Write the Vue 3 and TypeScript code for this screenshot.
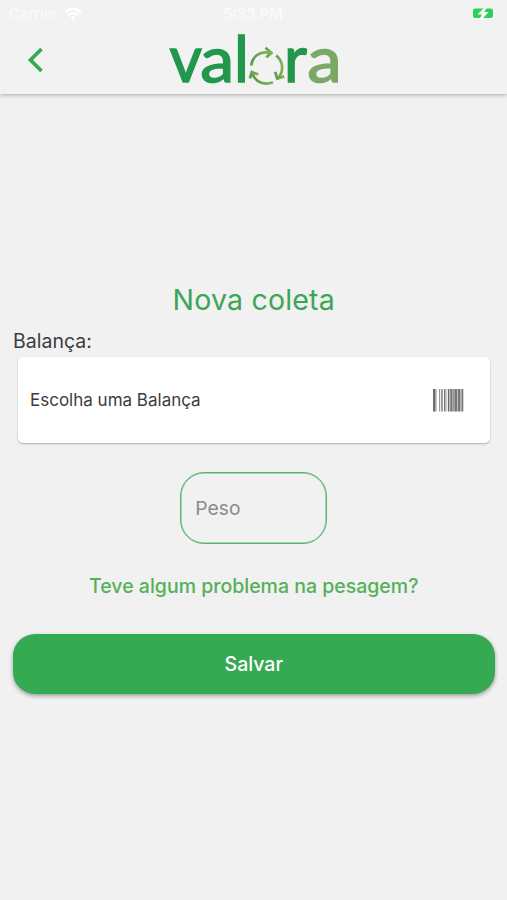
<script setup lang="ts">
import { ref } from 'vue'

interface Bar { x: number; w: number; color: string }

const peso = ref('')
const bars: Bar[] = [
  { x: 0, w: 2, color: '#6c6c6c' },
  { x: 2, w: 1.6, color: '#aaa' },
  { x: 6, w: 1.2, color: '#999' },
  { x: 8.3, w: 1.4, color: '#777' },
  { x: 11, w: 1.5, color: '#777' },
  { x: 13.4, w: 0.8, color: '#aaa' },
  { x: 15, w: 1.4, color: '#666' },
  { x: 17.2, w: 2.3, color: '#777' },
  { x: 19.5, w: 2, color: '#999' },
  { x: 21.5, w: 2.6, color: '#777' },
  { x: 24.1, w: 0.9, color: '#bbb' },
  { x: 25, w: 2.4, color: '#777' },
  { x: 27.4, w: 1.2, color: '#aaa' },
  { x: 28.6, w: 1.7, color: '#777' },
]
</script>

<template>
  <main class="screen">
    <header class="top">
      <div class="status">
        <div class="carrier">
          <span>Carrier</span>
          <svg width="18" height="14" viewBox="0 0 18 14" fill="none" stroke="#fff" stroke-width="2.6">
            <path d="M1 5.2Q9-1.8 17 5.2M4 8.3Q9 4 14 8.3" />
            <path d="M6.3 10.2Q9 8 11.7 10.2L9 13Z" fill="#fff" stroke="none" />
          </svg>
        </div>
        <span class="time">5:33 PM</span>
        <svg class="battery" width="26" height="14" viewBox="0 0 26 14">
          <rect x="1" y="1" width="22" height="12" rx="3" fill="#f7f7f7" />
          <rect x="2" y="1.4" width="20" height="9.6" rx="2" fill="#30cf5b" />
          <path d="M14 0 6.4 7.6h4.5L8 13h2.4l7.2-8h-4.4L16.4 0z" fill="#f5fbf6" />
        </svg>
      </div>
      <nav class="bar">
        <button class="back" aria-label="Voltar">
          <svg width="18" height="26" viewBox="0 0 18 26" fill="none" stroke="#34a853" stroke-width="3.7">
            <path d="M15.5 2 4.5 13l11 11" />
          </svg>
        </button>
        <svg class="logo" width="180" height="84" viewBox="0 -16 180 84">
          <defs>
            <linearGradient id="leaf" x1="0" y1="0" x2="1" y2="0">
              <stop offset="0" stop-color="#55a04d" />
              <stop offset="1" stop-color="#8cae50" />
            </linearGradient>
          </defs>
          <g class="word">
            <text x="1.6" y="49.2">v</text>
            <text transform="translate(32.2 49.2) scale(1.08 1)">a</text>
            <text x="66" y="49.2">l</text>
            <text x="116" y="49.2">r</text>
            <text transform="translate(139.2 49.2) scale(1.1 1)" class="light">a</text>
          </g>
          <g fill="none" stroke="url(#leaf)" stroke-width="2.7">
            <path d="M83.3 32.5C84 23.5 92 17.8 101.5 19.7" />
            <path d="M97.5 14.8 103.5 19.9 98.3 24.3" />
            <path d="M108.2 22.5C115.5 28.5 115.8 38 110.6 44.5" />
            <path d="M107.2 38.8 109.2 45.6 116.2 43.4" />
            <path d="M105 49.2C96 52.8 86.8 49 84.3 39.8" />
            <path d="M82 45.4 83.8 39 90.3 41.6" />
          </g>
        </svg>
      </nav>
    </header>

    <form class="form" @submit.prevent>
      <h1><span>Nova coleta</span></h1>
      <label class="label">Balança:</label>
      <div class="card">
        <span>Escolha uma Balança</span>
        <svg width="31" height="23" viewBox="0 0 31 23">
          <rect v-for="b in bars" :key="b.x" :x="b.x" y="0" :width="b.w" height="22.5" :fill="b.color" />
        </svg>
      </div>
      <input v-model="peso" class="peso" placeholder="Peso" />
      <a class="problem">Teve algum problema na pesagem?</a>
      <button class="save">Salvar</button>
    </form>
  </main>
</template>

<style>
body { background: #f1f1f1; }
</style>

<style scoped>
.screen {
  height: 900px;
  background: #f1f1f1;
  font-family: Inter, "Liberation Sans", sans-serif;
  color: #3c3c3e;
  overflow: hidden;
}
.top {
  height: 94px;
  background: #f2f2f2;
  box-shadow: 0 1px 4px rgba(0, 0, 0, 0.3);
}
.status {
  height: 27px;
  display: grid;
  grid-template-columns: 1fr auto 1fr;
  align-items: center;
  padding: 0 10px 0 9px;
  color: #fbfbfb;
  font-size: 15px;
}
.carrier { display: flex; align-items: center; gap: 6px; }
.time { font-weight: 500; }
.battery { justify-self: end; }
.bar {
  height: 67px;
  display: grid;
  grid-template-columns: 168px 180px 1fr;
  align-items: start;
}
.back {
  border: 0;
  background: none;
  padding: 20px 0 0 26px;
  text-align: left;
  line-height: 0;
}
.logo { margin-top: -10px; }
.word {
  font: 400 63px Lato, sans-serif;
  fill: #23974b;
  stroke: #23974b;
  stroke-width: 1.5px;
}
.light { fill: #7ca866; stroke: #7ca866; }
.form {
  display: flex;
  flex-direction: column;
  padding: 187px 12.5px 0 13px;
}
h1 {
  margin: 0;
  height: 38px;
  line-height: 38px;
  font-size: 28.5px;
  font-weight: 400;
  letter-spacing: 0.2px;
  color: #3aa757;
  text-align: center;
}
.label {
  height: 24px;
  margin-top: 10px;
  line-height: 24px;
  font-size: 19.5px;
}
.card {
  height: 86px;
  margin: 4px 4.5px 0 5px;
  padding: 0 26.5px 0 12px;
  display: flex;
  align-items: center;
  justify-content: space-between;
  box-sizing: border-box;
  border-radius: 5px;
  background: #fff;
  box-shadow: 0 1px 2px rgba(0, 0, 0, 0.28);
  font-size: 17px;
}
.peso {
  width: 147px;
  height: 72px;
  margin: 29px auto 0;
  padding: 0 14px 1px;
  box-sizing: border-box;
  border: 1px solid #5ab475;
  box-shadow: inset 0 0 0 0.5px #5ab475;
  border-radius: 24px;
  background: transparent;
  font: 19.3px Inter, sans-serif;
  outline: none;
}
.peso::placeholder { color: #8b8b8b; opacity: 1; }
.problem {
  margin-top: 30px;
  height: 24px;
  line-height: 24px;
  text-align: center;
  color: #55b059;
  font-size: 19.5px;
  font-weight: 500;
}
.save {
  height: 60px;
  margin-top: 36px;
  border: 0;
  border-radius: 22px;
  background: #36a953;
  box-shadow: 0 2px 4px rgba(0, 0, 0, 0.35);
  color: #fff;
  font: 500 19.5px Inter, sans-serif;
}
</style>
